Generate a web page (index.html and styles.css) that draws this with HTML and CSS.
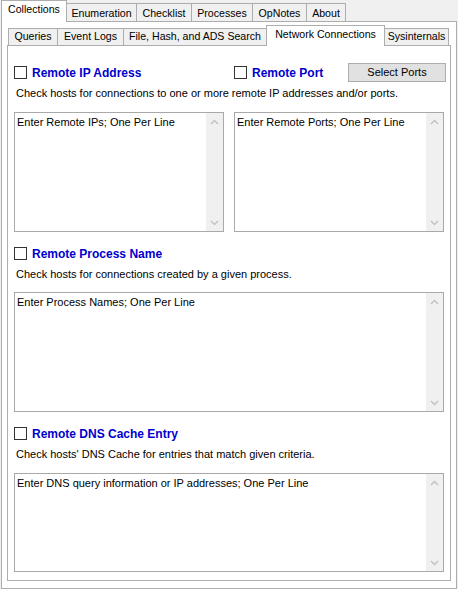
FILE: index.html
```html
<!DOCTYPE html>
<html>
<head>
<meta charset="utf-8">
<link rel="stylesheet" href="styles.css">
</head>
<body>
<div class="window">
  <div class="tabstrip outer-strip">
    <div class="tab outer-tab selected w-collections">Collections</div>
    <div class="tab outer-tab w-enum">Enumeration</div>
    <div class="tab outer-tab w-check">Checklist</div>
    <div class="tab outer-tab w-proc">Processes</div>
    <div class="tab outer-tab w-opnotes">OpNotes</div>
    <div class="tab outer-tab w-about">About</div>
  </div>
  <div class="outer-page">
    <div class="tabstrip inner-strip">
      <div class="tab inner-tab w-queries">Queries</div>
      <div class="tab inner-tab w-events">Event Logs</div>
      <div class="tab inner-tab w-file">File, Hash, and ADS Search</div>
      <div class="tab inner-tab selected w-net">Network Connections</div>
      <div class="tab inner-tab w-sys">Sysinternals</div>
    </div>
    <div class="inner-page">
      <div class="header two-col">
        <div class="check"><span class="box"></span><span class="label">Remote IP Address</span></div>
        <div class="right-head">
          <div class="check"><span class="box"></span><span class="label">Remote Port</span></div>
          <div class="btn">Select Ports</div>
        </div>
      </div>
      <p class="desc">Check hosts for connections to one or more remote IP addresses and/or ports.</p>
      <div class="two-col ta-row">
        <div class="textbox tall">
          <div class="text">Enter Remote IPs; One Per Line</div>
          <div class="vscroll">
            <span class="arrow"><svg width="9" height="6" viewBox="0 0 9 6"><path d="M1 5 L4.5 1.5 L8 5" fill="none" stroke="#c2c2c2" stroke-width="1.4"/></svg></span>
            <span class="arrow"><svg width="9" height="6" viewBox="0 0 9 6"><path d="M1 1 L4.5 4.5 L8 1" fill="none" stroke="#c2c2c2" stroke-width="1.4"/></svg></span>
          </div>
        </div>
        <div class="textbox tall">
          <div class="text">Enter Remote Ports; One Per Line</div>
          <div class="vscroll">
            <span class="arrow"><svg width="9" height="6" viewBox="0 0 9 6"><path d="M1 5 L4.5 1.5 L8 5" fill="none" stroke="#c2c2c2" stroke-width="1.4"/></svg></span>
            <span class="arrow"><svg width="9" height="6" viewBox="0 0 9 6"><path d="M1 1 L4.5 4.5 L8 1" fill="none" stroke="#c2c2c2" stroke-width="1.4"/></svg></span>
          </div>
        </div>
      </div>

      <div class="header">
        <div class="check"><span class="box"></span><span class="label">Remote Process Name</span></div>
      </div>
      <p class="desc">Check hosts for connections created by a given process.</p>
      <div class="textbox tall full">
        <div class="text">Enter Process Names; One Per Line</div>
        <div class="vscroll">
          <span class="arrow"><svg width="9" height="6" viewBox="0 0 9 6"><path d="M1 5 L4.5 1.5 L8 5" fill="none" stroke="#c2c2c2" stroke-width="1.4"/></svg></span>
          <span class="arrow"><svg width="9" height="6" viewBox="0 0 9 6"><path d="M1 1 L4.5 4.5 L8 1" fill="none" stroke="#c2c2c2" stroke-width="1.4"/></svg></span>
        </div>
      </div>

      <div class="header">
        <div class="check"><span class="box"></span><span class="label">Remote DNS Cache Entry</span></div>
      </div>
      <p class="desc">Check hosts' DNS Cache for entries that match given criteria.</p>
      <div class="textbox short full">
        <div class="text">Enter DNS query information or IP addresses; One Per Line</div>
        <div class="vscroll">
          <span class="arrow"><svg width="9" height="6" viewBox="0 0 9 6"><path d="M1 5 L4.5 1.5 L8 5" fill="none" stroke="#c2c2c2" stroke-width="1.4"/></svg></span>
          <span class="arrow"><svg width="9" height="6" viewBox="0 0 9 6"><path d="M1 1 L4.5 4.5 L8 1" fill="none" stroke="#c2c2c2" stroke-width="1.4"/></svg></span>
        </div>
      </div>
    </div>
  </div>
</div>
</body>
</html>
```
FILE: styles.css
```css
* { box-sizing: border-box; }
html, body {
  margin: 0;
  padding: 0;
  background: #f0f0f0;
}
body {
  font-family: "Liberation Sans", Arial, sans-serif;
  font-size: 11px;
  color: #000;
  width: 458px;
  height: 589px;
  overflow: hidden;
}
.window {
  width: 458px;
  height: 589px;
}
.tabstrip {
  display: flex;
  align-items: flex-end;
}
.outer-strip {
  height: 21px;
  padding-left: 1px;
}
.tab {
  position: relative;
  background: #f0f0f0;
  border: 1px solid #adadad;
  border-bottom: none;
  margin-right: -1px;
  text-align: center;
  white-space: nowrap;
  font-size: 10.6px;
}
.tab.selected {
  background: #fff;
  z-index: 2;
  margin-bottom: -1px;
}
.outer-tab {
  height: 18px;
  line-height: 18px;
}
.outer-tab.selected {
  height: 22px;
  line-height: 17px;
}
.w-collections { width: 66px; }
.w-enum { width: 71px; }
.w-check { width: 56px; }
.w-proc { width: 62px; }
.w-opnotes { width: 55px; }
.w-about { width: 40px; }

.outer-page {
  margin-left: 1px;
  width: 456px;
  height: 568px;
  border: 1px solid #adadad;
  background: #fff;
  padding: 3px 5px 7px 5px;
  display: flex;
  flex-direction: column;
}
.inner-strip {
  height: 20px;
  padding-left: 1px;
}
.inner-tab {
  height: 17px;
  line-height: 15px;
}
.inner-tab.selected {
  height: 21px;
  line-height: 17px;
}
.w-queries { width: 50px; }
.w-events { width: 67px; }
.w-file { width: 144px; }
.w-net { width: 119px; }
.w-sys { width: 65px; }

.inner-page {
  flex: 1;
  border: 1px solid #adadad;
  background: #fff;
  padding: 17px 6px 0 6px;
  display: flex;
  flex-direction: column;
}
.two-col {
  display: grid;
  grid-template-columns: 210px 210px;
  column-gap: 10px;
}
.header {
  height: 19px;
  align-items: center;
}
.header:not(.two-col) {
  display: flex;
  margin-top: 12px;
}
.check {
  display: flex;
  align-items: center;
  height: 19px;
}
.box {
  width: 13px;
  height: 13px;
  border: 1px solid #333;
  background: #fff;
  margin-right: 5px;
  flex: none;
}
.label {
  font-weight: bold;
  font-size: 12px;
  color: #0000cd;
  line-height: 14px;
}
.right-head {
  display: flex;
  align-items: center;
  justify-content: space-between;
  margin-right: -2px;
}
.btn {
  width: 98px;
  height: 19px;
  border: 1px solid #adadad;
  background: #e1e1e1;
  text-align: center;
  line-height: 16px;
}
.desc {
  margin: 5px 0 0 2px;
  line-height: 13px;
  height: 13px;
  white-space: nowrap;
}
.ta-row {
  margin-top: 12px;
}
.textbox {
  border: 1px solid #a9a9a9;
  background: #fff;
  display: flex;
}
.textbox.full {
  margin-top: 11px;
}
.textbox.short.full {
  margin-top: 12px;
}
.tall { height: 120px; }
.short { height: 99px; }
.text {
  flex: 1;
  padding: 3px 2px;
  line-height: 13px;
  white-space: nowrap;
}
.vscroll {
  width: 17px;
  background: #f0f0f0;
  display: flex;
  flex-direction: column;
  justify-content: space-between;
}
.arrow {
  height: 17px;
  display: flex;
  align-items: center;
  justify-content: center;
}
.arrow svg { display: block; }
```
